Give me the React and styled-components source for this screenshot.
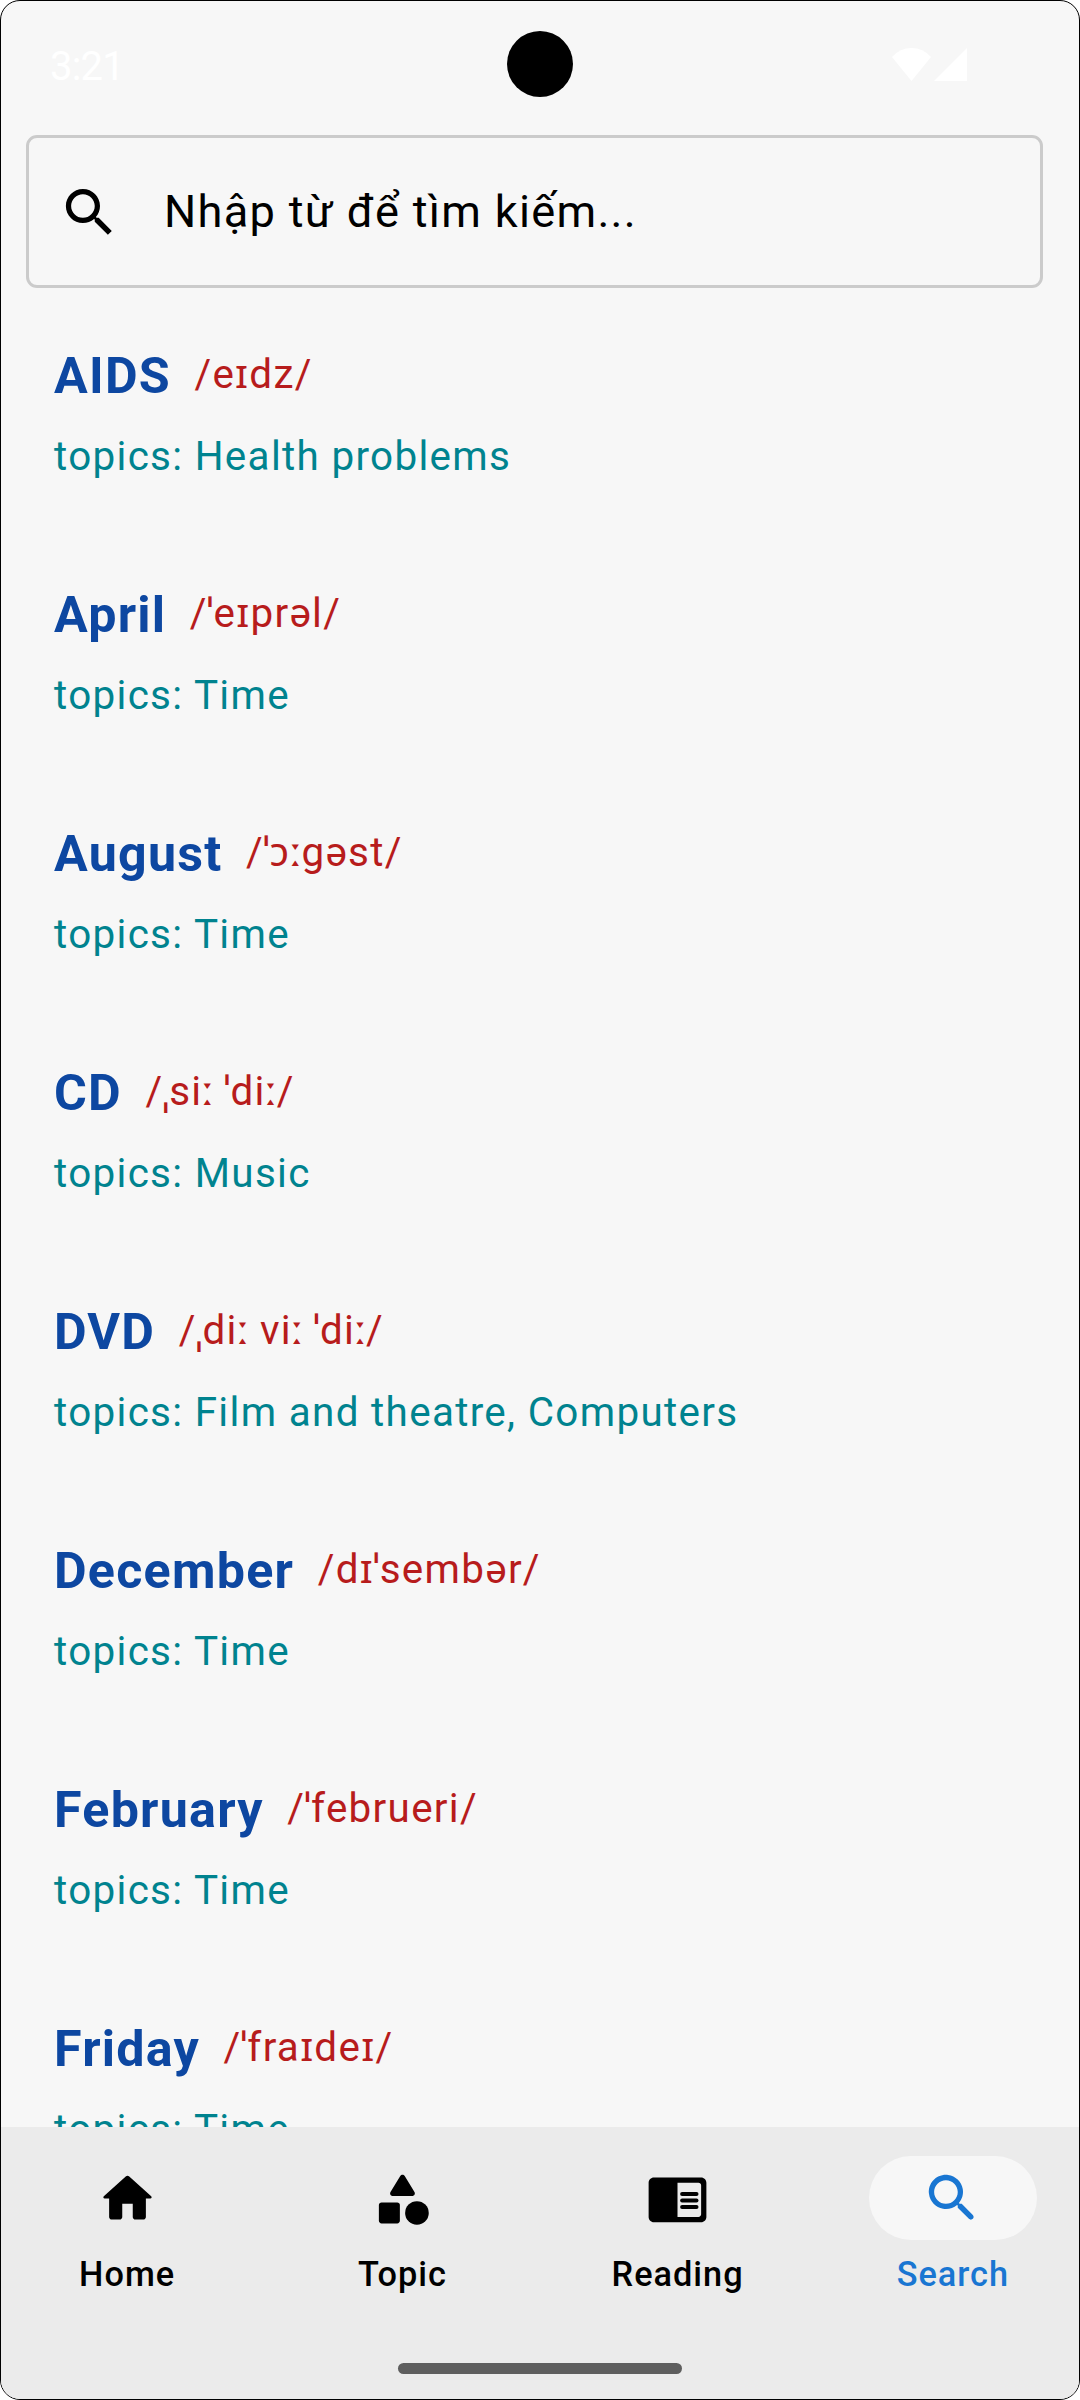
import React from "react";
import styled, { createGlobalStyle } from "styled-components";

const GlobalStyle = createGlobalStyle`
  * { box-sizing: border-box; }
  body {
    margin: 0;
    background: #ffffff;
    font-family: Roboto, "Noto Sans", "Liberation Sans", sans-serif;
  }
`;

const Screen = styled.div`
  width: 1080px;
  height: 2400px;
  display: flex;
  flex-direction: column;
  background: #f7f7f7;
  border: 1px solid #000000;
  border-radius: 20px;
  overflow: hidden;
`;

const StatusBar = styled.header`
  flex: none;
  height: 126px;
  padding: 0 112px 0 49px;
  display: grid;
  grid-template-columns: 1fr auto 1fr;
  align-items: center;
  color: #ffffff;
`;

const StatusSide = styled.div`
  display: flex;
  align-items: center;
  justify-content: ${(p) => (p.$end ? "flex-end" : "flex-start")};
  gap: 3px;
  ${(p) => (p.$end ? "" : "margin-right: -63px;")}
`;

const Clock = styled.span`
  font-size: 40px;
  line-height: 48px;
  letter-spacing: -0.8px;
  padding-top: 5px;
`;

const Camera = styled.div`
  width: 66px;
  height: 66px;
  margin-left: 63px;
  border-radius: 50%;
  background: #000000;
`;

const SearchBar = styled.div`
  flex: none;
  display: flex;
  align-items: center;
  height: 153px;
  margin: 8px 36px 42px 25px;
  padding: 0 29px;
  border: 3px solid #cbcbcb;
  border-radius: 11px;
`;

const SearchHint = styled.span`
  margin-left: 43px;
  font-size: 45.2px;
  line-height: 56px;
  letter-spacing: 1.3px;
  color: #000000;
  white-space: nowrap;
`;

const WordList = styled.main`
  flex: 1;
  min-height: 0;
  overflow: hidden;
`;

const WordRow = styled.article`
  height: 239px;
  padding: 16px 53px 0;
`;

const Heading = styled.div`
  display: flex;
  align-items: center;
  height: 60px;
  white-space: nowrap;
`;

const Word = styled.span`
  font-size: 50.2px;
  font-weight: 700;
  line-height: 60px;
  letter-spacing: 1.25px;
  color: #0d47a1;
`;

const Phonetic = styled.span`
  margin-left: 23.5px;
  padding-bottom: 3px;
  font-size: 40.4px;
  line-height: 50px;
  letter-spacing: 1.3px;
  color: #b71c1c;
`;

const Mark = styled.span`
  margin: 0 ${(p) => (p.$length ? "-1.7px" : "-1px")};
`;

const Topics = styled.div`
  margin-top: 26px;
  font-size: 40.4px;
  line-height: 50px;
  letter-spacing: 1.32px;
  color: #00838f;
  white-space: nowrap;
`;

const BottomBar = styled.footer`
  flex: none;
  height: 272px;
  background: #ebebeb;
  display: flex;
  flex-direction: column;
  align-items: center;
`;

const Tabs = styled.nav`
  flex: none;
  align-self: stretch;
  display: flex;
  gap: 21px;
  height: 236px;
  padding-top: 29px;
  margin: 0 -1px;
`;

const Tab = styled.div`
  flex: 1;
  display: flex;
  flex-direction: column;
  align-items: center;
  color: ${(p) => (p.$active ? "#1976d2" : "#000000")};
`;

const Pill = styled.div`
  width: 168px;
  height: 84px;
  border-radius: 42px;
  display: flex;
  align-items: center;
  justify-content: center;
  background: ${(p) => (p.$active ? "#f7f7f7" : "transparent")};
`;

const TabLabel = styled.span`
  margin-top: 13px;
  font-size: 34.3px;
  font-weight: 500;
  line-height: 42px;
  letter-spacing: 1px;
`;

const HomeHandle = styled.div`
  width: 284px;
  height: 11px;
  border-radius: 5.5px;
  background: #5e5e5e;
`;

const Glyph = styled.svg`
  flex: none;
  display: block;
  width: 63px;
  height: 63px;
  margin-top: ${(p) => p.$drop || 0}px;
  fill: currentColor;
`;

const HomeIcon = () => (
  <Glyph viewBox="0 0 24 24">
    <path d="M10 19v-5h4v5c0 .55.45 1 1 1h3c.55 0 1-.45 1-1v-7h1.7c.46 0 .68-.57.33-.87L12.67 3.6c-.38-.34-.96-.34-1.34 0l-8.36 7.53c-.34.3-.13.87.33.87H5v7c0 .55.45 1 1 1h3c.55 0 1-.45 1-1z" />
  </Glyph>
);

const TopicIcon = () => (
  <Glyph viewBox="0 0 24 24">
    <path d="M11.15 3.4 7.43 9.48c-.41.66.07 1.52.85 1.52h7.43c.78 0 1.26-.86.85-1.52L12.85 3.4c-.39-.64-1.31-.64-1.7 0z" />
    <circle cx="17.5" cy="17.5" r="4.5" />
    <path d="M4 21.5h6c.55 0 1-.45 1-1v-6c0-.55-.45-1-1-1H4c-.55 0-1 .45-1 1v6c0 .55.45 1 1 1z" />
  </Glyph>
);

const ReadingIcon = () => (
  <Glyph viewBox="0 0 24 24">
    <path
      fillRule="evenodd"
      d="M21 4H3c-1.1 0-2 .9-2 2v13c0 1.1.9 2 2 2h18c1.1 0 2-.9 2-2V6c0-1.1-.9-2-2-2zm0 14c0 .55-.45 1-1 1h-8V6h8c.55 0 1 .45 1 1v11z"
    />
    <rect x="13" y="9.5" width="7" height="1.5" rx=".75" />
    <rect x="13" y="12" width="7" height="1.5" rx=".75" />
    <rect x="13" y="14.5" width="7" height="1.5" rx=".75" />
  </Glyph>
);

const SearchRoundIcon = () => (
  <Glyph viewBox="0 0 24 24">
    <path d="M15.5 14h-.79l-.28-.27c1.2-1.4 1.82-3.31 1.48-5.34-.47-2.78-2.79-5-5.59-5.34-4.23-.52-7.79 3.04-7.27 7.27.34 2.8 2.56 5.12 5.34 5.59 2.03.34 3.94-.28 5.34-1.48l.27.28v.79l4.25 4.25c.41.41 1.08.41 1.49 0 .41-.41.41-1.08 0-1.49L15.5 14zm-6 0C7.01 14 5 11.99 5 9.5S7.01 5 9.5 5 14 7.01 14 9.5 11.99 14 9.5 14z" />
  </Glyph>
);

const SearchIcon = () => (
  <Glyph viewBox="0 0 24 24" $drop={2}>
    <path d="M15.5 14h-.79l-.28-.27C15.41 12.59 16 11.11 16 9.5 16 5.91 13.09 3 9.5 3S3 5.91 3 9.5 5.91 16 9.5 16c1.61 0 3.09-.59 4.23-1.57l.27.28v.79l5 4.99L20.49 19l-4.99-5zm-6 0C7.01 14 5 11.99 5 9.5S7.01 5 9.5 5 14 7.01 14 9.5 11.99 14 9.5 14z" />
  </Glyph>
);

const WifiIcon = () => (
  <svg width="39" height="33" viewBox="0 0 39 33" fill="#ffffff">
    <path d="M0 9Q8 0 19.5 0T39 9L19.5 33z" />
  </svg>
);

const SignalIcon = () => (
  <svg width="33" height="33" viewBox="0 0 33 33" fill="#ffffff">
    <path d="M33 0v33H0z" />
  </svg>
);

const words = [
  { word: "AIDS", phonetic: "/eɪdz/", topics: "Health problems" },
  { word: "April", phonetic: "/ˈeɪprəl/", topics: "Time" },
  { word: "August", phonetic: "/ˈɔːgəst/", topics: "Time" },
  { word: "CD", phonetic: "/ˌsiː ˈdiː/", topics: "Music" },
  { word: "DVD", phonetic: "/ˌdiː viː ˈdiː/", topics: "Film and theatre, Computers" },
  { word: "December", phonetic: "/dɪˈsembər/", topics: "Time" },
  { word: "February", phonetic: "/ˈfebrueri/", topics: "Time" },
  { word: "Friday", phonetic: "/ˈfraɪdeɪ/", topics: "Time" },
];

const tabs = [
  { label: "Home", Icon: HomeIcon },
  { label: "Topic", Icon: TopicIcon },
  { label: "Reading", Icon: ReadingIcon },
  { label: "Search", Icon: SearchRoundIcon, active: true },
];

// Length and stress marks have wide side bearings, so they are tucked in on both sides.
const renderPhonetic = (text) =>
  text.split(/([ːˈˌ])/).map((part, i) =>
    i % 2 === 1 ? (
      <Mark key={i} $length={part === "ː"}>
        {part}
      </Mark>
    ) : (
      part
    )
  );

export default function App() {
  return (
    <>
      <GlobalStyle />
      <Screen>
        <StatusBar>
          <StatusSide>
            <Clock>3:21</Clock>
          </StatusSide>
          <Camera />
          <StatusSide $end>
            <WifiIcon />
            <SignalIcon />
          </StatusSide>
        </StatusBar>
        <SearchBar>
          <SearchIcon />
          <SearchHint>Nhập từ để tìm kiếm...</SearchHint>
        </SearchBar>
        <WordList>
          {words.map((w) => (
            <WordRow key={w.word}>
              <Heading>
                <Word>{w.word}</Word>
                <Phonetic>{renderPhonetic(w.phonetic)}</Phonetic>
              </Heading>
              <Topics>topics: {w.topics}</Topics>
            </WordRow>
          ))}
        </WordList>
        <BottomBar>
          <Tabs>
            {tabs.map(({ label, Icon, active }) => (
              <Tab key={label} $active={active}>
                <Pill $active={active}>
                  <Icon />
                </Pill>
                <TabLabel>{label}</TabLabel>
              </Tab>
            ))}
          </Tabs>
          <HomeHandle />
        </BottomBar>
      </Screen>
    </>
  );
}
